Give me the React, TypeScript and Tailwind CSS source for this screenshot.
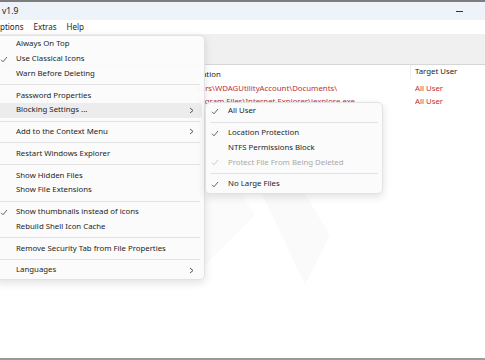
import React from 'react';

type Item =
  | { sep: true }
  | { label: string; checked?: boolean; arrow?: boolean; active?: boolean; disabled?: boolean };

const mainMenu: Item[] = [
  { label: 'Always On Top' },
  { label: 'Use Classical Icons', checked: true },
  { label: 'Warn Before Deleting' },
  { sep: true },
  { label: 'Password Properties' },
  { label: 'Blocking Settings ...', arrow: true, active: true },
  { sep: true },
  { label: 'Add to the Context Menu', arrow: true },
  { sep: true },
  { label: 'Restart Windows Explorer' },
  { sep: true },
  { label: 'Show Hidden Files' },
  { label: 'Show File Extensions' },
  { sep: true },
  { label: 'Show thumbnails instead of icons', checked: true },
  { label: 'Rebuild Shell Icon Cache' },
  { sep: true },
  { label: 'Remove Security Tab from File Properties' },
  { sep: true },
  { label: 'Languages', arrow: true },
];

const subMenu: Item[] = [
  { label: 'All User', checked: true },
  { sep: true },
  { label: 'Location Protection', checked: true },
  { label: 'NTFS Permissions Block' },
  { label: 'Protect File From Being Deleted', checked: true, disabled: true },
  { sep: true },
  { label: 'No Large Files', checked: true },
];

const Check = ({ muted }: { muted?: boolean }) => (
  <svg width="8" height="7" viewBox="0 0 8 7" fill="none" stroke={muted ? '#c4c4c4' : '#555'} strokeWidth="0.9">
    <path d="M1 3.8L3 5.8L7 1" />
  </svg>
);

const Arrow = () => (
  <svg width="5" height="7" viewBox="0 0 5 7" fill="none" stroke="#444" strokeWidth="0.9">
    <path d="M1 1L4 3.5L1 6" />
  </svg>
);

const Menu = ({ items, checkX, textX }: { items: Item[]; checkX: string; textX: string }) => (
  <div className="flex flex-col py-[1px]">
    {items.map((it, i) =>
      'sep' in it ? (
        <div key={i} className="h-[7.1px] flex items-center px-[4px]">
          <div className="h-px w-full bg-[#e3e3e3]" />
        </div>
      ) : (
        <div
          key={i}
          className={`h-[14.7px] flex items-center relative rounded-[3px] mx-[2px] ${it.active ? 'bg-[#ececec]' : ''}`}
        >
          <span className={`w-[12px] flex justify-center ${checkX}`}>{it.checked && <Check muted={it.disabled} />}</span>
          <span className={`flex-1 whitespace-nowrap ${textX} ${it.disabled ? 'text-[#a9a9a9]' : 'text-[#1e1e1e]'}`}>
            {it.label}
          </span>
          {it.arrow && (
            <span className="pr-[8px] flex items-center">
              <Arrow />
            </span>
          )}
        </div>
      )
    )}
  </div>
);

export default function App() {
  return (
    <div
      className="relative w-[485px] h-[360px] overflow-hidden bg-white flex flex-col text-[7.8px] leading-none"
      style={{ fontFamily: '"Noto Sans", "Open Sans", sans-serif' }}
    >
      {/* title bar */}
      <div className="h-[20px] shrink-0 border-t-[2px] border-[#7d7d7d] bg-[#eef2f9] flex items-center justify-between pl-[2px] pr-[22px]">
        <span className="text-[#222] text-[8.5px]">v1.9</span>
        <span className="w-[7px] h-px bg-[#333]" />
      </div>
      {/* menu bar */}
      <div className="h-[14px] shrink-0 bg-white flex items-center gap-[10px] text-[#1e1e1e] text-[8px]">
        <span>ptions</span>
        <span>Extras</span>
        <span>Help</span>
      </div>
      {/* toolbar */}
      <div className="h-[31px] shrink-0 bg-[#f0f0f0] border-b border-[#d6d6d6]" />
      {/* list */}
      <div className="flex-1 flex flex-col">
        <div className="h-[17px] flex items-end pb-[3px] text-[#222]">
          <span className="w-[410px] pl-[202px]">ation</span>
          <span className="pl-[4px] border-l border-[#eeeeee] h-[14px] flex items-center">Target User</span>
        </div>
        <div className="flex flex-col text-[#c0303a]">
          <div className="h-[13px] flex items-center">
            <span className="w-[410px] pl-[197px] whitespace-nowrap">sers\WDAGUtilityAccount\Documents\</span>
            <span className="pl-[5px]">All User</span>
          </div>
          <div className="h-[13px] flex items-center">
            <span className="w-[410px] pl-[197px] whitespace-nowrap">rogram Files\Internet Explorer\iexplore.exe</span>
            <span className="pl-[5px]">All User</span>
          </div>
        </div>
      </div>
      <div className="h-[2px] shrink-0 bg-[#9a9a9a]" />

      {/* faint watermark */}
      <svg className="absolute left-0 top-0 pointer-events-none" width="485" height="360" viewBox="0 0 485 360">
        <path d="M215 95 L245 95 L330 235 L305 285 Z" fill="#000" opacity="0.02" />
        <path d="M165 230 L230 175 L255 215 L190 280 Z" fill="#000" opacity="0.015" />
      </svg>

      {/* main dropdown */}
      <div className="absolute left-[-6px] top-[35px] w-[211px] bg-[#fbfbfb]/95 border border-[#e2e2e2] rounded-[5px] shadow-[0_3px_8px_rgba(0,0,0,0.12)]">
        <Menu items={mainMenu} checkX="ml-[1px]" textX="pl-[6px]" />
      </div>

      {/* submenu */}
      <div className="absolute left-[205px] top-[102px] w-[178px] bg-[#fbfbfb]/95 border border-[#e2e2e2] rounded-[5px] shadow-[0_3px_8px_rgba(0,0,0,0.12)]">
        <Menu items={subMenu} checkX="ml-[1px]" textX="pl-[7px]" />
      </div>
    </div>
  );
}
